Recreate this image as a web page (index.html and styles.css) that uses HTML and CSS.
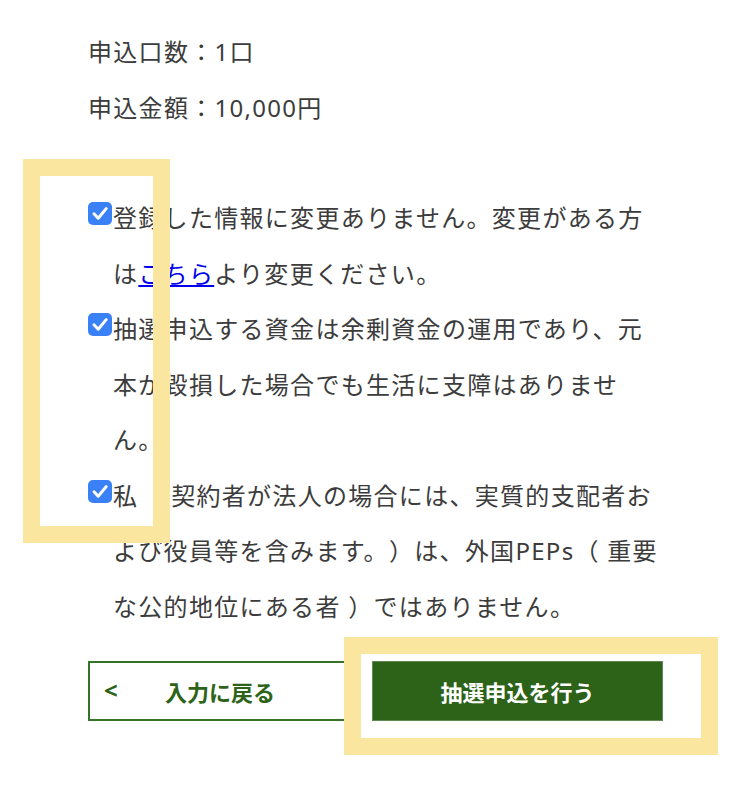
FILE: index.html
```html
<!DOCTYPE html>
<html lang="ja">
<head>
  <meta charset="UTF-8" />
  <meta name="viewport" content="width=device-width, initial-scale=1.0" />
  <title>抽選申込 確認</title>
  <link rel="stylesheet" href="styles.css">
</head>
<body>
  <main class="page">
    <div class="summary">
      <p>申込口数：1口</p>
      <p>申込金額：10,000円</p>
    </div>

    <ul class="agree-list">
      <li class="agree-item">
        <span class="check">
          <svg width="24" height="23" viewBox="0 0 24 23"><rect width="24" height="23" rx="5" fill="#3a80f6"/><path d="M6 11.8l4.2 4.4L18.2 6.6" fill="none" stroke="#fff" stroke-width="3" stroke-linecap="round" stroke-linejoin="round"/></svg>
        </span>
        <span class="agree-text">登録した情報に変更ありません。変更がある方は<a href="#">こちら</a>より変更ください。</span>
      </li>
      <li class="agree-item">
        <span class="check">
          <svg width="24" height="23" viewBox="0 0 24 23"><rect width="24" height="23" rx="5" fill="#3a80f6"/><path d="M6 11.8l4.2 4.4L18.2 6.6" fill="none" stroke="#fff" stroke-width="3" stroke-linecap="round" stroke-linejoin="round"/></svg>
        </span>
        <span class="agree-text">抽選申込する資金は余剰資金の運用であり、元本が毀損した場合でも生活に支障はありません。</span>
      </li>
      <li class="agree-item">
        <span class="check">
          <svg width="24" height="23" viewBox="0 0 24 23"><rect width="24" height="23" rx="5" fill="#3a80f6"/><path d="M6 11.8l4.2 4.4L18.2 6.6" fill="none" stroke="#fff" stroke-width="3" stroke-linecap="round" stroke-linejoin="round"/></svg>
        </span>
        <span class="agree-text">私（ 契約者が法人の場合には、実質的支配者および役員等を含みます。）は、外国PEPs（ 重要な公的地位にある者 ）ではありません。</span>
      </li>
    </ul>

    <div class="actions">
      <button class="btn btn-back" type="button">入力に戻る</button>
      <button class="btn btn-submit" type="button">抽選申込を行う</button>
    </div>
  </main>

  <!-- 注目箇所の枠 -->
  <div class="mark mark-check"></div>
  <div class="mark mark-submit"></div>
</body>
</html>
```

FILE: styles.css
```css
:root {
  --text: #3c3c3c;
  --green: #2c6319;
  --green-line: #357327;
  --mark: #fbe69f;
}

body {
  margin: 0;
  background: #fff;
  color: var(--text);
  font-family: 'Noto Sans', 'Noto Sans CJK JP', sans-serif;
  font-size: 24px;
  line-height: 55.5px;
  letter-spacing: 1.3px;
  text-spacing-trim: space-all;
}

.page {
  width: 575px;
  margin-left: 88px;
  padding-top: 24px;
}

.summary p {
  margin: 0;
}

.agree-list {
  list-style: none;
  margin: 55px 0 0;
  padding: 0;
}

.agree-item {
  display: flex;
  align-items: flex-start;
}

.check {
  flex: 0 0 25px;
  height: 23px;
  margin-top: 12px;
}

.check svg {
  display: block;
}

.agree-text {
  flex: 1;
}

.agree-text a {
  color: #0000ee;
}

.actions {
  display: flex;
  gap: 20px;
  margin-top: 27px;
}

.btn {
  position: relative;
  height: 60px;
  font-family: 'Noto Sans', 'Noto Sans CJK JP', sans-serif;
  font-size: 22px;
  font-weight: 700;
  letter-spacing: 0;
  cursor: pointer;
}

.btn-back {
  width: 264px;
  background: #fff;
  color: var(--green);
  border: 2px solid var(--green-line);
}

.btn-back::before {
  content: '<';
  position: absolute;
  left: 14px;
  top: 50%;
  font-size: 24px;
  transform: translateY(-54%);
}

.btn-submit {
  width: 291px;
  background: var(--green);
  color: #fff;
  border: 1px solid #5f8a52;
}

.mark {
  position: absolute;
  border: 17px solid var(--mark);
  box-sizing: border-box;
  pointer-events: none;
}

.mark-check {
  left: 23px;
  top: 159px;
  width: 147px;
  height: 384px;
}

.mark-submit {
  left: 344px;
  top: 637px;
  width: 374px;
  height: 118px;
}
```
